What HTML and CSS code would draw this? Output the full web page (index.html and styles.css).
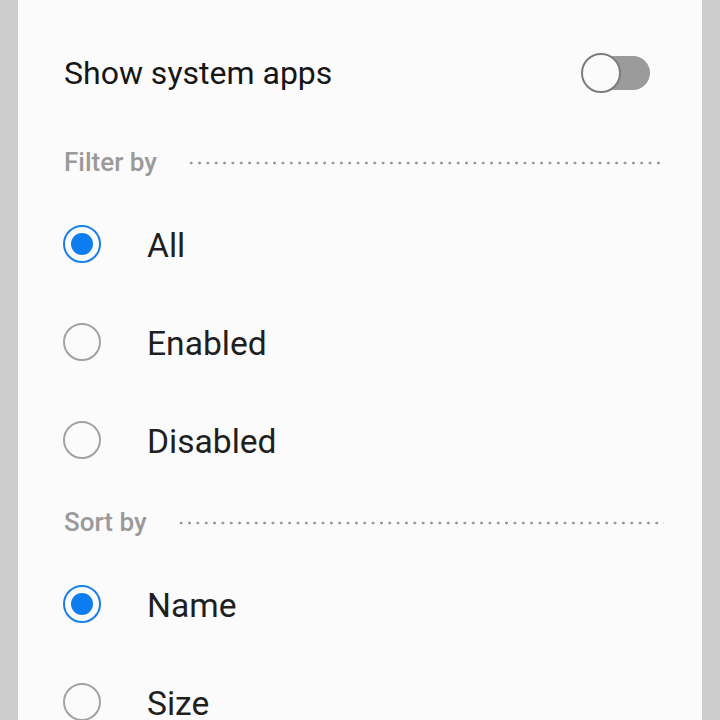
FILE: index.html
```html
<!DOCTYPE html>
<html lang="en">
<head>
<meta charset="utf-8">
<link rel="stylesheet" href="styles.css">
<title>Apps filter</title>
</head>
<body>
<div class="screen">
  <div class="card">
    <div class="switch-row">
      <span class="switch-label">Show system apps</span>
      <span class="switch">
        <span class="track"></span>
        <span class="thumb"></span>
      </span>
    </div>

    <div class="section-header">
      <span class="section-title">Filter by</span>
      <span class="dots"></span>
    </div>
    <div class="radio-row"><span class="radio checked"></span><span class="radio-label">All</span></div>
    <div class="radio-row"><span class="radio"></span><span class="radio-label">Enabled</span></div>
    <div class="radio-row"><span class="radio"></span><span class="radio-label">Disabled</span></div>

    <div class="section-header">
      <span class="section-title">Sort by</span>
      <span class="dots"></span>
    </div>
    <div class="radio-row"><span class="radio checked"></span><span class="radio-label">Name</span></div>
    <div class="radio-row"><span class="radio"></span><span class="radio-label">Size</span></div>
  </div>
</div>
</body>
</html>
```
FILE: styles.css
```css
html, body {
  margin: 0;
  padding: 0;
  height: 100%;
  overflow: hidden;
}
body {
  background: #cdcdcd;
  font-family: Roboto, "Noto Sans", "Liberation Sans", sans-serif;
  color: #1f1f1f;
}
.screen {
  padding: 0 18px;
  height: 720px;
}
.card {
  background: #fbfbfb;
  height: 100%;
  padding: 16px 38px 0 46px;
  box-sizing: border-box;
}
.switch-row {
  height: 113px;
  display: flex;
  align-items: center;
  justify-content: space-between;
}
.switch-label {
  font-size: 32px;
  color: #161616;
}
.switch {
  position: relative;
  width: 68px;
  height: 34px;
  margin-right: 14px;
}
.track {
  display: block;
  width: 100%;
  height: 100%;
  border-radius: 17px;
  background: #9b9b9b;
}
.thumb {
  position: absolute;
  left: -1px;
  top: -3px;
  width: 36px;
  height: 36px;
  border-radius: 50%;
  background: #fbfbfb;
  border: 2px solid #7d7d7d;
}
.section-header {
  height: 66px;
  display: flex;
  align-items: center;
}
.section-title {
  font-size: 26px;
  font-weight: 500;
  color: #9a9a9a;
  margin-right: 30px;
}
.dots {
  flex: 1;
  height: 4px;
  background-image: radial-gradient(circle, #9a9a9a 1.2px, transparent 1.7px);
  background-size: 8.35px 4px;
  background-repeat: repeat-x;
  margin-top: 2px;
}
.radio-row {
  height: 98px;
  display: flex;
  align-items: center;
}
.radio {
  width: 34px;
  height: 34px;
  border-radius: 50%;
  border: 2px solid #a2a2a2;
  margin-left: -1px;
  margin-right: 46px;
  position: relative;
  flex: none;
}
.radio.checked {
  border-color: #1a7fe8;
}
.radio.checked::after {
  content: "";
  position: absolute;
  left: 6px;
  top: 6px;
  width: 22px;
  height: 22px;
  border-radius: 50%;
  background: #0b7cf2;
}
.radio-label {
  font-size: 33.6px;
  color: #1f1f1f;
  margin-top: 2px;
}
```
